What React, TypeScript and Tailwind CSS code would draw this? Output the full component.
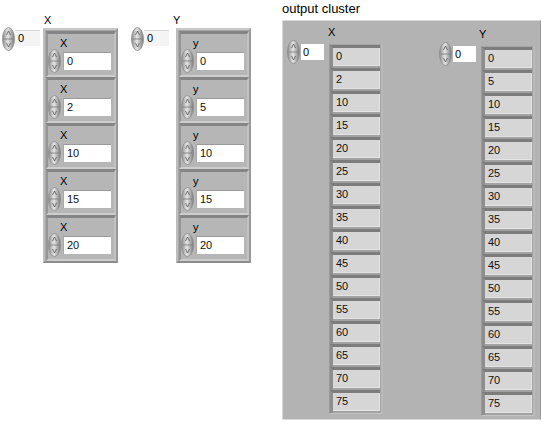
import React from 'react'

const font = { fontFamily: '"Liberation Sans", Arial, sans-serif' }

const X_VALUES = [0, 2, 10, 15, 20]
const Y_VALUES = [0, 5, 10, 15, 20]
const OUT_X = [0, 2, 10, 15, 20, 25, 30, 35, 40, 45, 50, 55, 60, 65, 70, 75]
const OUT_Y = [0, 5, 10, 15, 20, 25, 30, 35, 40, 45, 50, 55, 60, 65, 70, 75]

function Spinner() {
  return (
    <svg width="13" height="24" viewBox="0 0 13 24" className="block shrink-0">
      <defs>
        <linearGradient id="spin" x1="0" x2="1" y1="0" y2="0">
          <stop offset="0" stopColor="#8a8a8a" />
          <stop offset="0.45" stopColor="#e6e6e6" />
          <stop offset="1" stopColor="#7a7a7a" />
        </linearGradient>
      </defs>
      <ellipse cx="6.5" cy="12" rx="6" ry="11.5" fill="url(#spin)" stroke="#8c8c8c" strokeWidth="0.8" />
      <line x1="2" y1="12" x2="11" y2="12" stroke="#7a7a7a" strokeWidth="0.8" />
      <path d="M6.5 4 L4.5 8 M6.5 4 L8.5 8" stroke="#555" strokeWidth="0.8" fill="none" />
      <path d="M6.5 20 L4.5 16 M6.5 20 L8.5 16" stroke="#555" strokeWidth="0.8" fill="none" />
    </svg>
  )
}

function Field({ value }: { value: number | string }) {
  return (
    <div className="h-[18px] w-[48px] bg-white border-t border-l border-t-[#9a9a9a] border-l-[#a8a8a8] pl-[3px] text-[11px] leading-[16px] text-[#111]">
      {value}
    </div>
  )
}

function InCluster({ label, value }: { label: string; value: number }) {
  return (
    <div className="h-[46px] w-[70px] bg-[#b6b6b6] border-t-[3px] border-l-2 border-b-2 border-r-2 border-t-[#858585] border-l-[#959595] border-b-[#cdcdcd] border-r-[#c2c2c2]">
      <div className="ml-[12px] mt-[3px] h-[12px] text-[11px] leading-[12px] text-black">{label}</div>
      <div className="flex items-start">
        <Spinner />
        <div className="ml-[2px] mt-[3px]">
          <Field value={value} />
        </div>
      </div>
    </div>
  )
}

function InArray({
  name,
  item,
  values,
  labelMl,
  frameMl,
}: {
  name: string
  item: string
  values: number[]
  labelMl: string
  frameMl: string
}) {
  return (
    <div className="flex flex-col">
      <div className={`${labelMl} h-[14px] text-[11px] leading-[14px] text-black`}>{name}</div>
      <div className="flex items-start">
        <div className="ml-[2px] flex items-start">
          <Spinner />
          <div className="mt-[3px] h-[16px] w-[25px] bg-[#f4f4f4] border-t border-t-[#d8d8d8] pl-[3px] text-[11px] leading-[15px]">
            0
          </div>
        </div>
        <div
          className={`${frameMl} mt-[1px] w-[75px] bg-[#a6a6a6] border-2 border-t-[#c8c8c8] border-l-[#bdbdbd] border-b-[#8c8c8c] border-r-[#999] pl-[1px] pt-[1px] pb-[0px]`}
        >
          {values.map((v, i) => (
            <InCluster key={i} label={item} value={v} />
          ))}
        </div>
      </div>
    </div>
  )
}

function OutElem({ value }: { value: number }) {
  return (
    <div className="h-[23px] w-[50px] bg-[#a2a2a2] border-t-[3px] border-l-[3px] border-t-[#7c7c7c] border-l-[#8e8e8e]">
      <div className="h-[18px] w-[47px] bg-[#d6d6d6] border-b border-r border-b-[#e4e4e4] border-r-[#e4e4e4] pl-[3px] text-[11px] leading-[17px] text-[#111]">
        {value}
      </div>
    </div>
  )
}

function OutArray({ name, values, labelMl }: { name: string; values: number[]; labelMl: string }) {
  return (
    <div className="flex flex-col">
      <div className={`${labelMl} h-[15px] text-[11px] leading-[15px] text-black`}>{name}</div>
      <div className="flex items-start">
        <div className="flex items-start">
          <Spinner />
          <div className="ml-[1px] mt-[4px] h-[16px] w-[23px] bg-white pl-[2px] text-[11px] leading-[16px]">0</div>
        </div>
        <div className="ml-[5px] mt-[4px] w-[54px] bg-[#a4a4a4] border-l border-r-2 border-b border-l-[#999] border-r-[#b9b9b9] border-b-[#c4c4c4] pt-[1px]">
          {values.map((v, i) => (
            <OutElem key={i} value={v} />
          ))}
        </div>
      </div>
    </div>
  )
}

export default function App() {
  return (
    <div className="relative h-[424px] w-[545px] overflow-hidden bg-white" style={font}>
      <div className="flex items-start">
        <div className="mt-[13px] w-[129px]">
          <InArray name="X" item="X" values={X_VALUES} labelMl="ml-[44px]" frameMl="ml-[3px]" />
        </div>
        <div className="mt-[13px] w-[153px]">
          <InArray name="Y" item="y" values={Y_VALUES} labelMl="ml-[44px]" frameMl="ml-[7px]" />
        </div>
        <div className="flex flex-col">
          <div className="h-[20px] text-[13px] leading-[18px] text-black">output cluster</div>
          <div className="flex h-[400px] w-[259px] items-start border border-[#d9d9d9] border-r-[#999] bg-[#b3b3b3]">
            <div className="ml-[4px] mt-[4px] w-[152px]">
              <OutArray name="X" values={OUT_X} labelMl="ml-[41px]" />
            </div>
            <div className="mt-[6px]">
              <OutArray name="Y" values={OUT_Y} labelMl="ml-[40px]" />
            </div>
          </div>
        </div>
      </div>
    </div>
  )
}
